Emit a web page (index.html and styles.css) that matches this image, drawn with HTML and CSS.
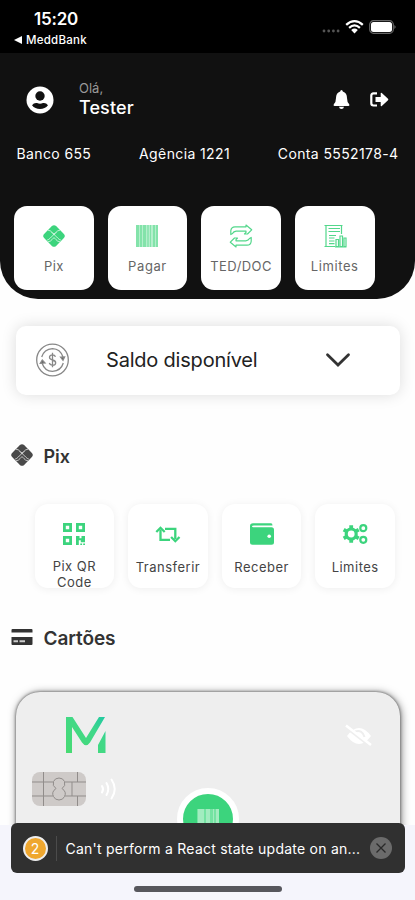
FILE: index.html
```html
<!DOCTYPE html>
<html lang="pt-BR">
<head>
<meta charset="utf-8">
<meta name="viewport" content="width=device-width, initial-scale=1">
<title>MeddBank</title>
<link rel="stylesheet" href="styles.css">
</head>
<body>
<svg class="defs" aria-hidden="true">
  <symbol id="pix" viewBox="0 0 24 24">
    <path d="M9.7 1.2Q12-.8 14.3 1.2L22.8 9.7Q24.8 12 22.8 14.3L14.3 22.8Q12 24.8 9.7 22.8L1.2 14.3Q-.8 12 1.2 9.7Z"/>
    <path d="M5.5 5.7Q8.2 5.8 9.8 8L12 10.3 14.2 8Q15.8 5.8 18.5 5.7M5.5 18.3Q8.2 18.2 9.8 16L12 13.7 14.2 16Q15.8 18.2 18.5 18.3M9.8 8L16 14.2Q17.7 16 19.5 16.5M14.2 8L8 14.2Q6.3 16 4.5 16.5" fill="none" stroke="#fff" stroke-width="1" stroke-opacity=".75"/>
  </symbol>
</svg>
<div class="phone">
  <div class="status">
    <div class="status-left">
      <span class="clock">15:20</span>
      <span class="back"><svg width="8" height="8" viewBox="0 0 8 8"><path d="M0 4L8 0V8Z" fill="#fff"/></svg><span>MeddBank</span></span>
    </div>
    <div class="status-right">
      <svg width="20" height="5" viewBox="0 0 20 5" fill="#555"><circle cx="3" cy="3" r="1.4"/><circle cx="7.7" cy="3" r="1.4"/><circle cx="12.4" cy="3" r="1.4"/><circle cx="17.1" cy="3" r="1.4"/></svg>
      <svg class="wifi" width="19" height="14" viewBox="0 0 19 14"><path d="M1.2 4.8Q9.5-2.5 17.8 4.8M4.1 7.8Q9.5 3 14.9 7.8" fill="none" stroke="#fff" stroke-width="2.3"/><path d="M6.2 10Q9.5 7.1 12.8 10L9.5 13.5Z" fill="#fff"/></svg>
      <svg class="battery" width="28" height="14" viewBox="0 0 28 14"><rect x=".7" y=".7" width="23.6" height="12.6" rx="3.8" fill="none" stroke="#666" stroke-width="1.2"/><rect x="2" y="2" width="21" height="10" rx="2.5" fill="#fff"/><path d="M25.5 5Q27.5 7 25.5 9Z" fill="#888"/></svg>
    </div>
  </div>

  <header class="header">
    <div class="profile">
      <svg class="avatar" width="28" height="28" viewBox="0 0 28 28"><circle cx="14" cy="14" r="13.5" fill="#fff"/><circle cx="14" cy="10" r="4.7" fill="#111"/><path d="M6 19.2Q8 16.6 11 17.1Q14 18.2 17 17.1Q20 16.6 22 19.2Q19 23 14 23T6 19.2Z" fill="#111"/></svg>
      <div class="hello"><span class="ola">Olá,</span><span class="name">Tester</span></div>
      <svg class="bell" width="17" height="19" viewBox="0 0 17 19" fill="#fff"><path d="M8.5 0Q9.7 0 9.8 1.5Q14 2.8 14 8Q14 12.3 16.2 14.2Q17 16 15.5 16H1.5Q0 16 .8 14.2Q3 12.3 3 8Q3 2.8 7.2 1.5Q7.3 0 8.5 0Z"/><path d="M6 16.8H11Q10.6 19 8.5 19T6 16.8Z"/></svg>
      <svg class="logout" width="19" height="15" viewBox="0 0 19 15"><path d="M7 1.4H3.5Q1.3 1.4 1.3 3.6V11.3Q1.3 13.5 3.5 13.5H7" fill="none" stroke="#fff" stroke-width="2.2"/><path d="M5.5 5.1H10.7V1.3Q10.7.2 11.8 1L18 6.7Q18.7 7.5 18 8.3L11.8 14Q10.7 14.7 10.7 13.6V9.9H5.5Z" fill="#fff"/></svg>
    </div>
    <div class="account"><span>Banco 655</span><span>Agência 1221</span><span>Conta 5552178-4</span></div>
    <div class="tiles">
      <div class="tile"><svg width="24" height="24" viewBox="0 0 24 24" fill="#3cd47d"><use href="#pix" x="1" y="1" width="22" height="22"/></svg><span class="snug">Pix</span></div>
      <div class="tile"><svg width="24" height="24" viewBox="0 0 24 24"><path fill="#b4efcc" d="M1 1H23V23H1Z"/><path fill="#83e3aa" d="M1 1h3v22H1zM5 1h2v22H5zM8 1h3v22H8zM12.3 1h1.4v22h-1.4zM15 1h1v22h-1zM18 1h2v22h-2zM21 1h2v22h-2z"/></svg><span>Pagar</span></div>
      <div class="tile"><svg width="24" height="24" viewBox="0 0 24 24" fill="none" stroke="#53d78b" stroke-width="1.2" stroke-linejoin="round"><path d="M1.8 10.5V6.8Q2.2 2.8 6 2.8H17V1L22.7 5.8 18.5 10H15.5L17 8.4V7.2H7.2Q4.5 7.5 3.5 9.5ZM22.2 13.5V17.2Q21.8 21.2 18 21.2H7V23L1.3 18.2 5.5 14H8.5L7 15.6V16.8H16.8Q19.5 16.5 20.5 14.5Z"/></svg><span class="ted">TED/DOC</span></div>
      <div class="tile"><svg width="24" height="24" viewBox="0 0 24 24" fill="none" stroke="#53d78b" stroke-width="1.2"><path d="M1.5 1.5H19.5M1.5 22.5H12M3 1V23M18.5 1V10M5.5 4.5H17M5.5 7.5H17M6 11.5H13M6 14H11.5M6 17H11.5M6 19.7H11.5"/><path d="M13 17V22.5H15.5V15.5H13ZM17 22.5V12H19.5V22.5ZM21 22.5V14H23V22.5ZM12 23H23.5"/></svg><span>Limites</span></div>
    </div>
  </header>

  <section class="balance">
    <svg width="34" height="34" viewBox="0 0 34 34" fill="none" stroke="#888" stroke-width="1.3"><circle cx="16.5" cy="17" r="15.8"/><path d="M5.7 14Q8 6.2 16.5 5.6 24.3 5.8 27 14M27.3 20Q25 27.8 16.5 28.4 8.7 28.2 6 20"/><path d="M4.3 20.3L6.3 17 9 20ZM24.6 14.2L28.6 14 27 17.3Z" fill="#555"/><path d="M19.5 13.8Q18.7 11.8 16.5 11.8 13.5 12 13.5 14.3 13.5 16.3 16.5 17 19.7 17.7 19.7 20 19.5 22.3 16.5 22.3 13.9 22.2 13.3 20M16.5 9.8V24.3"/></svg>
    <span>Saldo disponível</span>
    <svg width="24" height="14" viewBox="0 0 24 14"><path d="M1.5 1.8L12 12 22.5 1.8" fill="none" stroke="#333" stroke-width="2.8" stroke-linecap="round"/></svg>
  </section>

  <h2 class="title title-pix"><svg width="22" height="22" viewBox="0 0 24 24" fill="#494949"><use href="#pix"/></svg><span>Pix</span></h2>
  <div class="tiles tiles-pix">
    <div class="tile light"><svg width="24" height="24" viewBox="0 0 24 24"><path d="M2.4 2.4H8.6V8.6H2.4ZM15.4 2.4H21.6V8.6H15.4ZM2.4 15.4H8.6V21.6H2.4Z" fill="none" stroke="#3cd47d" stroke-width="2.8"/><path d="M14 14h3.5v2.2h2V14H23v6.3h-4.2v-2h-2V23H14zM18.3 21.4h1.8V23h-1.8zM21.2 21.4H23V23h-1.8z" fill="#3cd47d"/></svg><span class="two">Pix QR<br>Code</span></div>
    <div class="tile light"><svg width="26" height="24" viewBox="0 0 26 24"><path d="M5.5 7.5V17.8H15M10 6.8H20.3V17" fill="none" stroke="#3cd47d" stroke-width="2.3"/><path d="M1.3 10L5.5 5.8 9.7 10M16.1 15L20.3 19.2 24.5 15" fill="none" stroke="#3cd47d" stroke-width="2.3"/></svg><span>Transferir</span></div>
    <div class="tile light"><svg width="26" height="24" viewBox="0 0 26 24"><path d="M4 1.2H22Q23.5 1.2 23.5 3.5H5Q3 3.5 3 4.5T5 5.2H22.5Q25 5.2 25 7.7V20.2Q25 22.7 22.5 22.7H3.5Q1 22.7 1 20.2V4Q1 1.2 4 1.2Z" fill="#3cd47d"/><circle cx="20.2" cy="14.2" r="1.8" fill="#fff"/></svg><span>Receber</span></div>
    <div class="tile light"><svg width="26" height="24" viewBox="0 0 26 24" fill="none" stroke="#3cd47d"><circle cx="9.2" cy="12" r="5" stroke-width="3.2"/><path d="M9.2 3.3V6.2M9.2 17.8V20.7M1.7 7.7L4.2 9.1M14.2 14.9L16.7 16.3M1.7 16.3L4.2 14.9M14.2 9.1L16.7 7.7" stroke-width="3.8"/><circle cx="21.3" cy="6.2" r="3" stroke-width="2.2"/><circle cx="21.3" cy="17.8" r="3" stroke-width="2.2"/></svg><span>Limites</span></div>
  </div>

  <h2 class="title title-cards"><svg width="22" height="18" viewBox="0 0 22 18"><path d="M1.5 1H20.5Q21.5 1 21.5 2V4.5H.5V2Q.5 1 1.5 1ZM.5 9H21.5V16Q21.5 17 20.5 17H1.5Q.5 17 .5 16Z" fill="#333"/><path d="M2.5 13.3H7M8.5 13.3H14" stroke="#ccc" stroke-width="2"/></svg><span>Cartões</span></h2>
  <section class="bank-card">
    <div class="card-top">
      <svg class="brand" width="40" height="37" viewBox="0 0 40 37"><defs><linearGradient id="g" x1="0" y1="1" x2="1" y2="0"><stop stop-color="#48db72"/><stop offset=".65" stop-color="#40d889"/><stop offset="1" stop-color="#20c9a2"/></linearGradient></defs><path d="M0 36V0H6.5L20 21 33 0H39L24 25.5Q20 31 16 25.5L6 10V36ZM39.5 14V36H32V28Z" fill="url(#g)"/></svg>
      <svg class="hidden-eye" width="28" height="22" viewBox="0 0 28 22"><path d="M2 11Q14-5 26 11 14 27 2 11Z" fill="#fff"/><path d="M10 6.5Q17 4 19.5 12" fill="none" stroke="#eee" stroke-width="2"/><path d="M1 2.5L26 22" stroke="#eee" stroke-width="2.5"/><path d="M1 .5L26 20" stroke="#fff" stroke-width="2.5"/></svg>
    </div>
    <div class="chip-row">
      <svg width="54" height="34" viewBox="0 0 54 34"><rect width="54" height="34" rx="8" fill="#cecac8"/><g fill="none" stroke="#918d8b" stroke-width="1"><path d="M0 10H21M33 10H54M0 24H21M33 24H54M11.5 0V34M45.5 0V10M45.5 24V34M40 10V24"/><path d="M24 16.5Q20 14 21.5 9.5 23 6 27 6T32.5 9.5Q34 14 30 16.5 35 20 32.5 24.5 31 28 27 28T21.5 24.5Q19 20 24 16.5Z"/></g></svg>
      <svg width="18" height="24" viewBox="0 0 18 24" fill="none" stroke="#fff" stroke-width="2" stroke-linecap="round"><path d="M2 9Q4 12 2 15.5M6.5 6Q10 12 6.5 18M11.5 2.5Q18 12 11.5 21.5"/></svg>
    </div>
    <div class="barcode"><svg width="22" height="24" viewBox="0 0 22 24"><path d="M0 1h22v22H0z" fill="#74e3a2"/><path d="M1 1h6v22H1zM9 1h4v22H9zM16 1h1v22h-1zM19 1h3v22h-3z" fill="#a2ecc0"/></svg></div>
  </section>

  <footer class="bottom">
    <div class="toast">
      <span class="count">2</span><i class="divider"></i><span class="message">Can't perform a React state update on an...</span>
      <svg width="22" height="22" viewBox="0 0 22 22"><circle cx="11" cy="11" r="11" fill="#6b6b6b"/><path d="M6.5 6.5L15.5 15.5M15.5 6.5L6.5 15.5" stroke="#292929" stroke-width="1.3"/></svg>
    </div>
    <div class="home"></div>
  </footer>
</div>
</body>
</html>
```
FILE: styles.css
```css
* { box-sizing: border-box; }
body { margin: 0; background: #fefefe; font-family: Inter, "Liberation Sans", sans-serif; }
svg { display: block; flex: none; overflow: visible; }
.defs { position: absolute; width: 0; height: 0; }
.phone { position: relative; width: 415px; height: 900px; overflow: hidden; }
.status { height: 53px; background: #000; color: #fff; display: flex; justify-content: space-between; padding: 9px 18px 0 14px; }
.status-left { display: flex; flex-direction: column; }
.clock { padding-left: 20px; font-size: 17px; line-height: 21px; font-weight: 600; letter-spacing: -.2px; }
.back { display: flex; align-items: center; gap: 4px; font-size: 11.5px; line-height: 20px; font-weight: 500; letter-spacing: .25px; }
.status-right { display: flex; align-items: flex-start; padding-top: 11px; }
.status-right > :first-child { margin-top: 8px; }
.wifi { margin-left: 4px; }
.battery { margin-left: 5px; }
.header { height: 246px; background: #111; border-radius: 0 0 38px 38px; color: #fff; }
.profile { display: flex; align-items: center; height: 90px; padding: 3px 26px 0; }
.hello { display: flex; flex-direction: column; margin-left: 25px; flex: 1; }
.ola { color: #999; font-size: 13px; line-height: 17px; }
.name { font-size: 18px; line-height: 22px; font-weight: 500; letter-spacing: .1px; }
.logout { margin-left: 20px; }
.account { height: 21px; padding: 1px 16.5px 0; display: flex; justify-content: space-between; line-height: 20px; font-size: 14px; letter-spacing: .38px; }
.tiles { display: flex; gap: 13.8px; padding: 42px 0 0 14px; }
.tile { width: 79.8px; height: 84px; border-radius: 13px; background: #fff; display: flex; flex-direction: column; align-items: center; padding-top: 18px; color: #666; }
.tile span { margin-top: 9px; font-size: 13px; line-height: 18px; letter-spacing: .6px; white-space: nowrap; }
.tile .ted { letter-spacing: .45px; }
.tile .snug { letter-spacing: .45px; }
.balance { height: 69px; margin: 26.5px 15px 0 16px; padding: 0 50px 0 20px; background: #fff; border-radius: 10px; box-shadow: 0 0 15px #0002; display: flex; align-items: center; color: #222; }
.balance span { flex: 1; margin-left: 36px; font-size: 20px; letter-spacing: -.2px; }
.title { display: flex; align-items: center; gap: 10.5px; margin: 0 0 0 11px; height: 24px; color: #333; font-size: 19px; font-weight: 600; }
.title-pix { margin-top: 49px; font-size: 18px; }
.title-pix svg { margin-top: -2px; }
.title-pix span { margin-top: 2px; }
.title-cards { margin-top: 38px; letter-spacing: -.1px; }
.title-cards svg { margin-top: -2px; }
.title-cards span { margin-top: 2px; }
.tiles-pix { padding: 36px 0 0 34.5px; }
.tile.light { box-shadow: 0 1px 9px #0001; color: #444; }
.tile.light span { margin-top: 12px; letter-spacing: .5px; }
.tile.light .two { line-height: 16px; text-align: center; letter-spacing: .5px; }
.bank-card { height: 242px; margin: 42px 15px 0 16px; background: #eee; border-radius: 24px; box-shadow: 0 0 3px #555, 1px 1px 8px #0008; padding: 25px 27px 0 16px; }
.card-top { display: flex; justify-content: space-between; height: 55px; padding-left: 34px; }
.hidden-eye { margin-top: 8px; }
.chip-row { display: flex; align-items: center; gap: 14px; }
.barcode { display: flex; justify-content: center; width: 62px; height: 62px; margin: -18px 0 0 145px; border-radius: 50%; border: 6px solid #fff; background: #3cd47d; padding-top: 14px; }
.bottom { position: absolute; left: 0; right: 0; bottom: 0; height: 75px; background: #f5f5fc; display: flex; flex-direction: column; align-items: center; }
.toast { width: 394px; height: 50px; margin-top: -2px; border-radius: 6px; background: #303030; color: #fff; display: flex; align-items: center; padding: 0 13px 0 12px; }
.count { width: 25px; height: 25px; border: 2px solid #eee; border-radius: 50%; background: #efa72f; text-align: center; font-size: 14px; line-height: 21px; }
.divider { width: 1px; height: 25px; margin: 0 9px 0 8px; background: #4b4b4b; }
.message { flex: 1; white-space: nowrap; font-size: 14px; letter-spacing: .24px; }
.home { width: 148px; height: 6px; margin-top: 13px; border-radius: 3px; background: #57575d; }
```
